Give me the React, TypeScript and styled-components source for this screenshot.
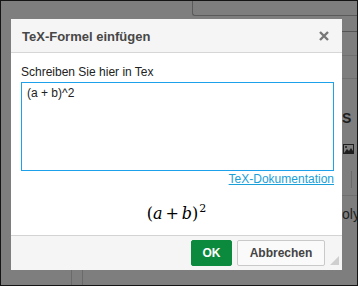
import React from "react";
import styled, { createGlobalStyle } from "styled-components";

const Global = createGlobalStyle`
  html, body { margin: 0; padding: 0; }
  body { font-family: "Liberation Sans", Arial, sans-serif; }
  * { box-sizing: border-box; }
`;

const Page = styled.div`
  position: relative;
  width: 358px;
  height: 286px;
  background: #7e7e7e;
  border: 1px solid #141414;
  overflow: hidden;
  display: flex;
  flex-direction: column;
`;

/* ---- background page (behind the modal overlay) ---- */

const TopStrip = styled.div`
  height: 15px;
  flex: none;
  display: flex;
  padding-left: 191px;
`;

const Tab = styled.div`
  flex: 1;
  border-left: 1px solid #5a5a5a;
  border-bottom: 1px solid #5a5a5a;
  border-bottom-left-radius: 3px;
`;

const MidRow = styled.div`
  flex: 1;
  display: flex;
`;

const Spacer = styled.div`
  flex: 1;
`;

const SidePanel = styled.div`
  width: 56px;
  flex: none;
  display: flex;
  flex-direction: column;
`;

const SideSection = styled.div<{ $h?: number; $dark?: boolean }>`
  flex: ${(p) => (p.$h ? "none" : "1")};
  height: ${(p) => (p.$h ? `${p.$h}px` : "auto")};
  border-bottom: 1px solid ${(p) => (p.$dark ? "#555" : "#707070")};
  display: flex;
  flex-direction: column;
  align-items: flex-start;
  padding-left: 41px;
`;

const SideLast = styled.div`
  flex: 1;
  padding: 11px 0 0 41px;
  font-size: 14px;
  line-height: 14px;
  color: #1e1e1e;
  white-space: nowrap;
`;

const SideHeading = styled.div`
  margin-top: 32px;
  font-size: 14px;
  line-height: 14px;
  font-weight: 700;
  color: #1e1e1e;
`;

const SideIcon = styled.svg`
  margin-top: 19px;
  margin-left: 1px;
  flex: none;
`;

const SideDivider = styled.div`
  margin-top: 17px;
  margin-left: 9px;
  width: 1px;
  height: 17px;
  background: #6a6a6a;
`;

const BottomStrip = styled.div`
  height: 15px;
  flex: none;
  display: flex;
  padding-left: 70px;
`;

const BottomCell = styled.div`
  width: 12px;
  border-left: 1px solid #6a6a6a;
  border-right: 1px solid #6a6a6a;
`;

/* ---- modal ---- */

const Dialog = styled.div`
  position: absolute;
  left: 10px;
  top: 18px;
  width: 331px;
  height: 251px;
  background: #fff;
  display: flex;
  flex-direction: column;
`;

const Header = styled.div`
  height: 34px;
  flex: none;
  background: #f5f5f5;
  border-bottom: 1px solid #d6d6d6;
  display: flex;
  align-items: center;
  justify-content: space-between;
  padding: 1px 13px 0 11px;
`;

const Title = styled.div`
  font-size: 13px;
  font-weight: 700;
  color: #474747;
`;

const Close = styled.button`
  border: none;
  background: none;
  padding: 0;
  width: 10px;
  height: 10px;
  display: flex;
  cursor: pointer;
`;

const Body = styled.div`
  flex: 1;
  display: flex;
  flex-direction: column;
  padding: 12px 8px 0 10px;
`;

const Label = styled.label`
  font-size: 12px;
  line-height: 14px;
  color: #222;
`;

const Input = styled.textarea`
  margin-top: 3px;
  width: 313px;
  height: 89px;
  border: 1px solid #1da1ea;
  padding: 3px 5px;
  font-family: "Liberation Sans", Arial, sans-serif;
  font-size: 12px;
  line-height: 14px;
  color: #222;
  resize: none;
  outline: none;
`;

const DocLink = styled.a`
  align-self: flex-end;
  margin-top: 1px;
  font-size: 12px;
  line-height: 14px;
  color: #1aa0d8;
  text-decoration: underline;
`;

const Preview = styled.div`
  flex: 1;
  display: flex;
  align-items: center;
  justify-content: center;
  padding-top: 7px;
  padding-right: 2px;
`;

const MathRow = styled.span`
  font-family: "DejaVu Serif", "Liberation Serif", serif;
  font-size: 16px;
  line-height: 20px;
  color: #000;
  white-space: nowrap;
`;

const MathVar = styled.i`
  font-style: italic;
`;

const MathOp = styled.span`
  margin: 0 3px;
`;

const Sup = styled.sup`
  font-size: 11px;
  vertical-align: 7px;
  line-height: 0;
  margin-left: 1px;
`;

const Footer = styled.div`
  height: 35px;
  flex: none;
  background: #f5f5f5;
  border-top: 1px solid #d3d3d3;
  display: flex;
  align-items: center;
  justify-content: flex-end;
  gap: 5px;
  padding: 0 3px 0 0;
`;

const Button = styled.button<{ $primary?: boolean }>`
  height: 26px;
  font-family: "Liberation Sans", Arial, sans-serif;
  font-size: 12px;
  font-weight: 700;
  border-radius: 2px;
  cursor: pointer;
  padding: 0;
  width: ${(p) => (p.$primary ? "41px" : "88px")};
  color: ${(p) => (p.$primary ? "#fff" : "#444")};
  background: ${(p) => (p.$primary ? "#0b8a3d" : "#fafafa")};
  border: 1px solid ${(p) => (p.$primary ? "#0b8a3d" : "#c9c9c9")};
`;

const Grip = styled.svg`
  align-self: flex-end;
  margin-bottom: 5px;
  flex: none;
`;

export default function App() {
  return (
    <Page>
      <Global />
      <TopStrip>
        <Tab />
      </TopStrip>
      <MidRow>
        <Spacer />
        <SidePanel>
          <SideSection $h={16} $dark />
          <SideSection $h={24} />
          <SideSection $h={23} />
          <SideSection $h={117}>
            <SideHeading>S</SideHeading>
            <SideIcon width="11" height="10" viewBox="0 0 11 10">
              <rect x="0.5" y="0.5" width="10" height="9" fill="none" stroke="#1e1e1e" />
              <path d="M1 9 L4 5 L6 7 L8 4 L10 7 L10 9 Z" fill="#1e1e1e" />
              <circle cx="3" cy="3" r="1" fill="#1e1e1e" />
            </SideIcon>
            <SideDivider />
          </SideSection>
          <SideLast>oly</SideLast>
        </SidePanel>
      </MidRow>
      <BottomStrip>
        <BottomCell />
      </BottomStrip>

      <Dialog>
        <Header>
          <Title>TeX-Formel einfügen</Title>
          <Close aria-label="Schließen">
            <svg width="10" height="10" viewBox="0 0 10 10">
              <path d="M1 1 L9 9 M9 1 L1 9" stroke="#777" strokeWidth="2.4" strokeLinecap="butt" />
            </svg>
          </Close>
        </Header>
        <Body>
          <Label>Schreiben Sie hier in Tex</Label>
          <Input defaultValue="(a + b)^2" spellCheck={false} />
          <DocLink href="#">TeX-Dokumentation</DocLink>
          <Preview>
            <MathRow>
              (<MathVar>a</MathVar>
              <MathOp>+</MathOp>
              <MathVar>b</MathVar>)<Sup>2</Sup>
            </MathRow>
          </Preview>
        </Body>
        <Footer>
          <Button $primary>OK</Button>
          <Button>Abbrechen</Button>
          <Grip width="9" height="9" viewBox="0 0 9 9">
            <polygon points="9,0 9,9 0,9" fill="#cfcfcf" />
          </Grip>
        </Footer>
      </Dialog>
    </Page>
  );
}
